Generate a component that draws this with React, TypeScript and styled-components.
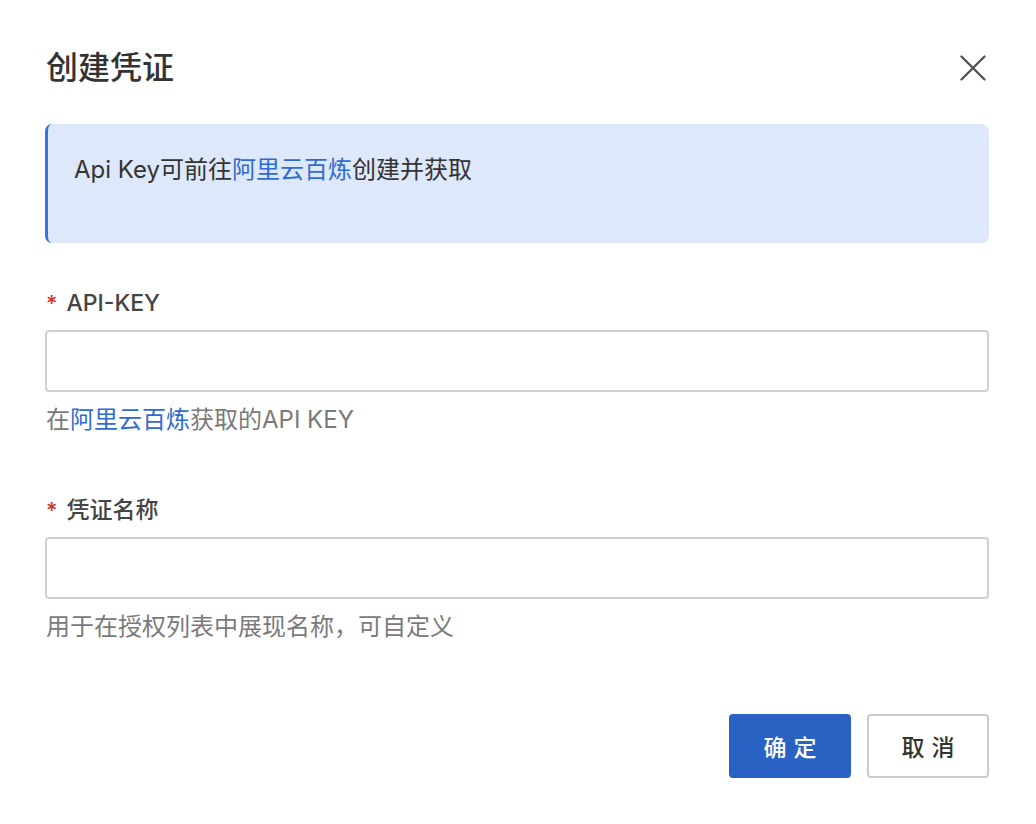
import styled, { createGlobalStyle } from "styled-components";

const GlobalStyle = createGlobalStyle`
  html, body {
    margin: 0;
    padding: 0;
    background: #ffffff;
  }
  body {
    font-family: "Inter", "Noto Sans CJK SC", sans-serif;
    color: #333333;
  }
`;

const CloseIcon = () => (
  <svg width="26" height="26" viewBox="0 0 26 26" fill="none">
    <path
      d="M1.5 1.5L24.5 24.5M24.5 1.5L1.5 24.5"
      stroke="#4d4d4d"
      strokeWidth="2.2"
      strokeLinecap="round"
    />
  </svg>
);

const App = () => {
  return (
    <>
      <GlobalStyle />
      <Dialog>
        <Header>
          <Title>创建凭证</Title>
          <CloseButton aria-label="关闭">
            <CloseIcon />
          </CloseButton>
        </Header>

        {/* tip box */}
        <Alert>
          Api Key可前往<Link>阿里云百炼</Link>创建并获取
        </Alert>

        <Field>
          <Label>
            <Required>*</Required>API-KEY
          </Label>
          <Input type="text" />
          <Help>
            在<Link>阿里云百炼</Link>获取的API KEY
          </Help>
        </Field>

        <Field>
          <Label>
            <Required>*</Required>凭证名称
          </Label>
          <Input type="text" />
          <Help>用于在授权列表中展现名称，可自定义</Help>
        </Field>

        <Footer>
          <Button $primary>确定</Button>
          <Button>取消</Button>
        </Footer>
      </Dialog>
    </>
  );
};

export default App;

// dialog body
const Dialog = styled.div`
  width: 1036px;
  height: 824px;
  box-sizing: border-box;
  padding: 50px 47px 0 45px;
  display: flex;
  flex-direction: column;
`;

const Header = styled.div`
  display: flex;
  align-items: center;
  justify-content: space-between;
  height: 36px;
  margin-bottom: 38px;
`;

const Title = styled.h1`
  margin: 0;
  font-size: 32px;
  line-height: 36px;
  font-weight: 500;
  color: #333333;
  padding-left: 1px;
`;

const CloseButton = styled.button`
  border: none;
  background: none;
  padding: 0;
  margin-right: 3px;
  width: 26px;
  height: 26px;
  display: flex;
  cursor: pointer;
`;

// info alert
const Alert = styled.div`
  box-sizing: border-box;
  height: 119px;
  padding: 28px 20px 0 26px;
  background: #dee8fb;
  border-left: 3px solid #3571ee;
  border-radius: 7px;
  font-size: 24px;
  line-height: 36px;
  color: #333333;
  margin-bottom: 44px;
`;

const Link = styled.span`
  color: #2f6bd2;
  cursor: pointer;
`;

// form fields
const Field = styled.div`
  display: flex;
  flex-direction: column;
  margin-bottom: 58px;
`;

const Label = styled.label`
  font-size: 23px;
  line-height: 32px;
  font-weight: 500;
  color: #444444;
  display: flex;
  align-items: center;
  margin-bottom: 11px;
  padding-left: 1px;
`;

const Required = styled.span`
  color: #d93026;
  margin-right: 9px;
  font-size: 22px;
`;

const Input = styled.input`
  box-sizing: border-box;
  height: 62px;
  width: 100%;
  border: 2px solid #cfcfcf;
  border-radius: 4px;
  outline: none;
  padding: 0 14px;
  font-size: 22px;
`;

const Help = styled.div`
  margin-top: 12px;
  font-size: 24px;
  line-height: 32px;
  color: #7a7a7a;
  padding-left: 1px;
`;

// footer buttons
const Footer = styled.div`
  display: flex;
  justify-content: flex-end;
  gap: 16px;
  margin-top: 13px;
`;

const Button = styled.button<{ $primary?: boolean }>`
  box-sizing: border-box;
  width: 122px;
  height: 64px;
  border-radius: 4px;
  font-family: "Noto Sans CJK SC", sans-serif;
  font-size: 23px;
  font-weight: 500;
  letter-spacing: 7px;
  text-indent: 7px;
  cursor: pointer;
  border: 2px solid ${(p) => (p.$primary ? "#2a62c4" : "#cccccc")};
  background: ${(p) => (p.$primary ? "#2a62c4" : "#ffffff")};
  color: ${(p) => (p.$primary ? "#ffffff" : "#333333")};
`;
